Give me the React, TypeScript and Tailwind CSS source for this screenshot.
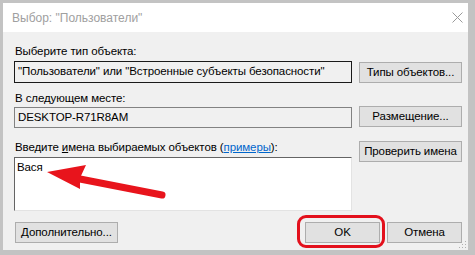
import React from "react";

const font = { fontFamily: '"Liberation Sans", Arial, sans-serif' };

function Btn({ children, className = "" }: { children: React.ReactNode; className?: string }) {
  return (
    <div
      className={
        "h-[21px] bg-[#e1e1e1] border border-[#adadad] flex items-center justify-center text-[11.5px] tracking-[-0.1px] text-black leading-none whitespace-nowrap " +
        className
      }
    >
      {children}
    </div>
  );
}

export default function App() {
  return (
    <div
      className="relative w-[475px] h-[255px] bg-[#c3c3c3] pt-[3px] pl-[3px] pr-[7px] pb-[5px]"
      style={font}
    >
      <div className="relative flex flex-col h-full bg-[#f0f0f0]">
        {/* Title bar */}
        <div className="h-[29px] bg-white flex items-center justify-between pl-[9px] pr-[5px]">
          <span className="text-[12px] text-[#a0a0a0] leading-none whitespace-nowrap">Выбор: "Пользователи"</span>
          <svg width="11" height="11" viewBox="0 0 11 11">
            <path d="M0.5 0.5 L10.5 10.5 M10.5 0.5 L0.5 10.5" stroke="#9a9a9a" strokeWidth="1" />
          </svg>
        </div>

        <div className="flex flex-col pl-[11px] pr-[6px] text-[11.5px] tracking-[-0.1px] text-black">
          {/* Row 1 */}
          <div className="mt-[11px] h-[16px] leading-[16px] whitespace-nowrap pl-[1px]">Выберите тип объекта:</div>
          <div className="mt-[2px] flex gap-[7px]">
            <div className="w-[338px] h-[22px] border border-[#1a1a1a] flex items-center pl-[3px] leading-none whitespace-nowrap">
              "Пользователи" или "Встроенные субъекты безопасности"
            </div>
            <Btn className="w-[103px] mt-[1px]">Типы объектов...</Btn>
          </div>

          {/* Row 2 */}
          <div className="mt-[7px] h-[16px] leading-[16px] whitespace-nowrap pl-[1px]">В следующем месте:</div>
          <div className="flex gap-[7px]">
            <div className="mt-[1px] w-[338px] h-[21px] border border-[#828282] flex items-center pl-[3px] leading-none">
              DESKTOP-R71R8AM
            </div>
            <Btn className="w-[103px]">Размещение...</Btn>
          </div>

          {/* Row 3 */}
          <div className="flex gap-[7px]">
            <div className="flex flex-col w-[338px]">
              <div className="mt-[11px] h-[16px] leading-[16px] whitespace-nowrap pl-[1px]">
                Введите <span className="underline">и</span>мена выбираемых объектов (<span className="text-[#0066cc] underline">примеры</span>):
              </div>
              <div className="mt-[2px] h-[54px] bg-white border-t border-l border-[#646464] border-r-[#e3e3e3] border-b-[#e3e3e3] border-r border-b pl-[2px] pt-[1px] leading-[16px]">
                Вася
              </div>
            </div>
            <div className="pt-[13px]">
              <Btn className="w-[103px]">Проверить имена</Btn>
            </div>
          </div>

          {/* Bottom row */}
          <div className="mt-[11px] flex items-center">
            <Btn className="w-[103px] ml-[1px]">Дополнительно...</Btn>
            <div className="flex-1" />
            <div className="relative">
              <Btn className="w-[75px]">OK</Btn>
              <div className="absolute left-[-8px] right-[-5px] top-[-7px] bottom-[-5px] border-[3px] border-[#e3101c] rounded-[9px]" />
            </div>
            <Btn className="w-[75px] ml-[7px]">Отмена</Btn>
          </div>
        </div>

        {/* resize grip */}
        <svg width="8" height="8" viewBox="0 0 8 8" className="absolute right-[1px] bottom-[1px]">
          <rect x="6" y="0" width="1" height="1" fill="#b0b0b0" />
          <rect x="3" y="3" width="1" height="1" fill="#b0b0b0" />
          <rect x="6" y="3" width="1" height="1" fill="#b0b0b0" />
          <rect x="0" y="6" width="1" height="1" fill="#b0b0b0" />
          <rect x="3" y="6" width="1" height="1" fill="#b0b0b0" />
          <rect x="6" y="6" width="1" height="1" fill="#b0b0b0" />
        </svg>
      </div>

      {/* Red arrow overlay */}
      <svg
        width="475"
        height="255"
        viewBox="0 0 475 255"
        className="absolute left-0 top-0 pointer-events-none"
      >
        <line x1="162" y1="195" x2="80" y2="179" stroke="#e8141c" strokeWidth="7" strokeLinecap="round" />
        <polygon points="47,172 86,165 80,178 80,189" fill="#e8141c" />
      </svg>
    </div>
  );
}
